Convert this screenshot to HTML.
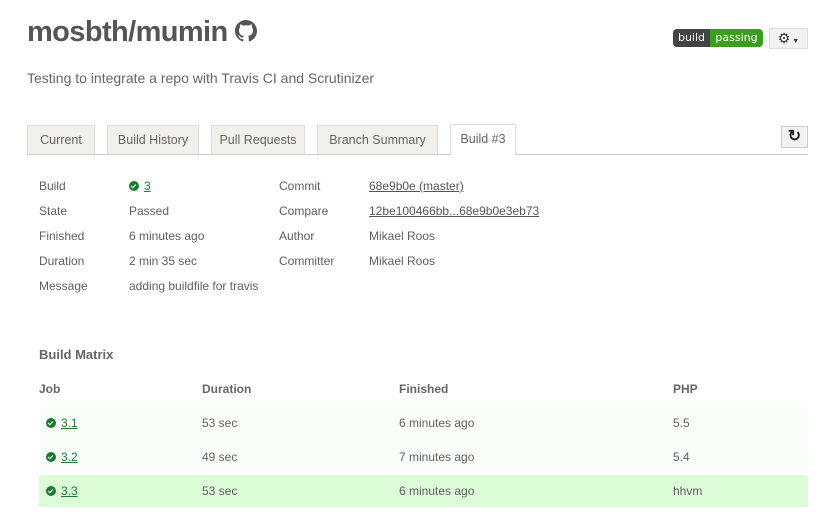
<!DOCTYPE html>
<html><head><meta charset="utf-8"><style>
*{margin:0;padding:0;box-sizing:border-box}
body{width:833px;height:526px;background:#fff;font-family:"Liberation Sans",sans-serif;color:#606060;position:relative;overflow:hidden;font-size:12px}
.a{position:absolute;white-space:nowrap}
h1{position:absolute;left:27px;top:16px;font-size:29px;font-weight:bold;color:#555;letter-spacing:-0.6px}
.desc{left:27px;top:70px;font-size:14px;color:#666}
.tab{position:absolute;top:125px;height:30px;background:#f1f0eb;border:1px solid #ddd;border-bottom:none;font-size:12.5px;color:#666;text-align:center;line-height:29px}
.tab.on{background:#fff;height:30px;top:124px}
.line{position:absolute;left:27px;top:154px;width:781px;height:1px;background:#ccc}
a{color:#555;text-decoration:underline}
.g{color:#1e7a3a}
.chk{display:inline-block;width:10px;height:10px;border-radius:50%;background:#1a7a32;position:relative;vertical-align:-1px;margin-right:5px}
.chk:after{content:"";position:absolute;left:3px;top:2px;width:2px;height:4px;border:solid #fff;border-width:0 1.5px 1.5px 0;transform:rotate(45deg)}
.row{position:absolute;left:39px;width:769px;height:32px;background:#f9fff8}
.th{font-weight:bold;color:#666;font-size:12px}
</style></head><body>
<h1>mosbth/mumin <svg width="22" height="22" viewBox="0 0 16 16" style="vertical-align:-1px"><path fill="#555" d="M8 0C3.6 0 0 3.6 0 8c0 3.5 2.3 6.5 5.5 7.6.4.1.5-.2.5-.4v-1.4c-2.2.5-2.7-1-2.7-1-.4-.9-.9-1.2-.9-1.2-.7-.5.1-.5.1-.5.8.1 1.2.8 1.2.8.7 1.2 1.900.9 2.3.7.1-.5.3-.9.5-1.100-1.8-.2-3.6-.9-3.6-4 0-.9.3-1.6.8-2.1-.1-.2-.4-1 .1-2.1 0 0 .7-.2 2.2.8.6-.2 1.3-.3 2-.3s1.4.1 2 .3c1.5-1 2.2-.8 2.2-.8.4 1.1.2 1.9.1 2.1.5.6.8 1.3.8 2.1 0 3.1-1.9 3.7-3.6 3.9.3.3.5.8.5 1.5v2.2c0 .2.1.5.6.4C13.7 14.5 16 11.5 16 8c0-4.4-3.6-8-8-8z"/></svg></h1>
<div class="a desc">Testing to integrate a repo with Travis CI and Scrutinizer</div>
<div class="a" style="left:673px;top:29px;width:90px;height:18px;border-radius:4px;overflow:hidden;font-family:'DejaVu Sans',sans-serif;font-size:11px;color:#fff;line-height:18px">
<span style="display:inline-block;width:37px;background:#444;text-align:center">build</span><span style="display:inline-block;width:53px;background:#3c9e1e;text-align:center">passing</span></div>
<div class="a" style="left:769px;top:28px;width:39px;height:21px;background:#f2f2f2;border:1px solid #ddd;font-size:14px;color:#333;line-height:19px;text-align:center">⚙<span style="font-size:7px"> ▼</span></div>
<div class="tab" style="left:27px;width:68px">Current</div>
<div class="tab" style="left:107px;width:92px">Build History</div>
<div class="tab" style="left:211px;width:94px">Pull Requests</div>
<div class="tab" style="left:317px;width:121px">Branch Summary</div>
<div class="line"></div>
<div class="tab on" style="left:450px;width:66px;height:31px">Build #3</div>
<div class="a" style="left:781px;top:126px;width:27px;height:22px;background:#f2f2f2;border:1px solid #ccc;font-size:16px;font-weight:bold;color:#222;text-align:center;line-height:20px">↻</div>

<div class="a" style="left:39px;top:174px;line-height:25px">Build<br>State<br>Finished<br>Duration<br>Message</div>
<div class="a" style="left:129px;top:174px;line-height:25px"><span class="chk"></span><a class="g" href="#">3</a><br>Passed<br>6 minutes ago<br>2 min 35 sec<br>adding buildfile for travis</div>
<div class="a" style="left:279px;top:174px;line-height:25px">Commit<br>Compare<br>Author<br>Committer</div>
<div class="a" style="left:369px;top:174px;line-height:25px"><a href="#">68e9b0e (master)</a><br><a href="#">12be100466bb...68e9b0e3eb73</a><br>Mikael Roos<br>Mikael Roos</div>

<div class="a th" style="left:39px;top:347px;font-size:13px">Build Matrix</div>
<div class="a th" style="left:39px;top:382px">Job</div>
<div class="a th" style="left:202px;top:382px">Duration</div>
<div class="a th" style="left:399px;top:382px">Finished</div>
<div class="a th" style="left:673px;top:382px">PHP</div>

<div class="row" style="top:407px"></div>
<div class="row" style="top:441px"></div>
<div class="row" style="top:475px;background:#dcfcd8;border-radius:2px"></div>
<div class="a" style="left:46px;top:406px;line-height:34px"><span class="chk"></span><a class="g" href="#">3.1</a><br><span class="chk"></span><a class="g" href="#">3.2</a><br><span class="chk"></span><a class="g" href="#">3.3</a></div>
<div class="a" style="left:202px;top:406px;line-height:34px">53 sec<br>49 sec<br>53 sec</div>
<div class="a" style="left:399px;top:406px;line-height:34px">6 minutes ago<br>7 minutes ago<br>6 minutes ago</div>
<div class="a" style="left:673px;top:406px;line-height:34px">5.5<br>5.4<br>hhvm</div>
</body></html>
